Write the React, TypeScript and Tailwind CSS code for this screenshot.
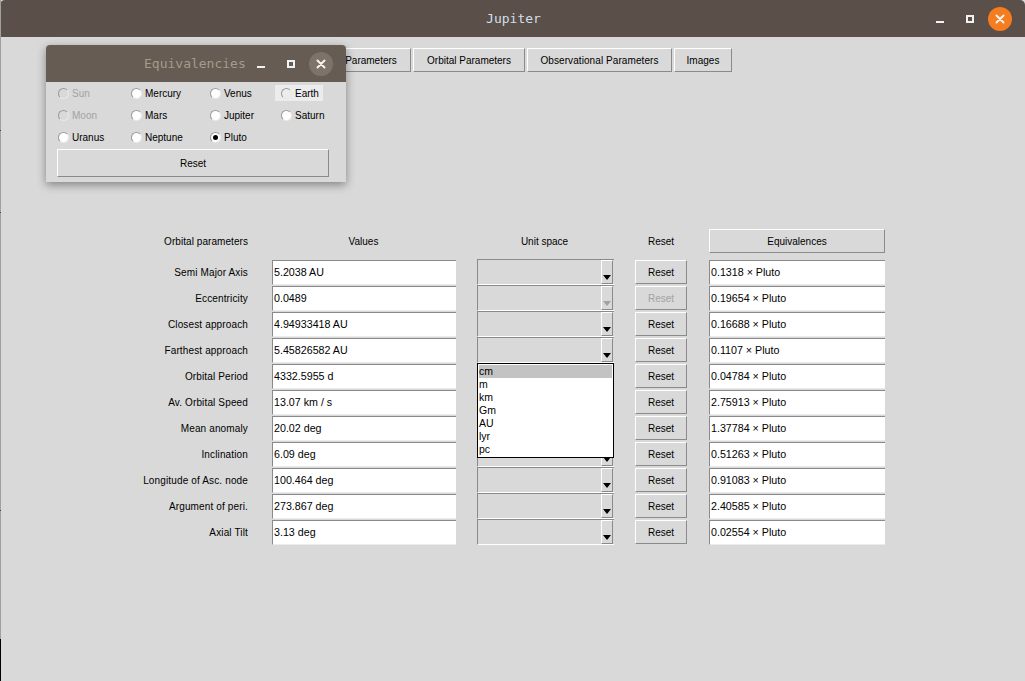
const sans = "font-['Liberation_Sans',Arial,sans-serif]";

const rows = [
  ["Semi Major Axis", "5.2038 AU", "0.1318 × Pluto"],
  ["Eccentricity", "0.0489", "0.19654 × Pluto"],
  ["Closest approach", "4.94933418 AU", "0.16688 × Pluto"],
  ["Farthest approach", "5.45826582 AU", "0.1107 × Pluto"],
  ["Orbital Period", "4332.5955 d", "0.04784 × Pluto"],
  ["Av. Orbital Speed", "13.07 km / s", "2.75913 × Pluto"],
  ["Mean anomaly", "20.02 deg", "1.37784 × Pluto"],
  ["Inclination", "6.09 deg", "0.51263 × Pluto"],
  ["Longitude of Asc. node", "100.464 deg", "0.91083 × Pluto"],
  ["Argument of peri.", "273.867 deg", "2.40585 × Pluto"],
  ["Axial Tilt", "3.13 deg", "0.02554 × Pluto"],
];

const radios = [
  ["Sun", "Mercury", "Venus", "Earth"],
  ["Moon", "Mars", "Jupiter", "Saturn"],
  ["Uranus", "Neptune", "Pluto", ""],
];

function TkButton({ label, className = "", disabled = false }: { label: string; className?: string; disabled?: boolean }) {
  return (
    <div
      className={`flex items-center justify-center border border-t-white border-l-white border-b-[#8a8a8a] border-r-[#8a8a8a] bg-[#d9d9d9] ${
        disabled ? "text-[#a3a3a3]" : "text-black"
      } ${className}`}
    >
      {label}
    </div>
  );
}

function Entry({ value, className = "" }: { value: string; className?: string }) {
  return (
    <div
      className={`mt-[1px] flex h-[25px] items-center self-start border-t border-l border-b border-t-[#8a8a8a] border-l-[#8a8a8a] border-b-[#ececec] bg-white pl-[1px] text-[10.7px] text-black ${className}`}
    >
      {value}
    </div>
  );
}

function Combo({ disabled = false }: { disabled?: boolean }) {
  return (
    <div className="flex h-[26px] w-[137px] justify-end border-t border-l border-b border-t-[#8a8a8a] border-l-[#8a8a8a] border-b-white">
      <div className="mr-[1px] flex w-[12px] items-end justify-center border border-t-white border-l-white border-b-[#8a8a8a] border-r-[#8a8a8a] pb-[3px]">
        <svg width="8" height="5" viewBox="0 0 8 5">
          <path d="M0 0H8L4 5Z" fill={disabled ? "#a3a3a3" : "#000"} />
        </svg>
      </div>
    </div>
  );
}

function Radio({ label }: { label: string }) {
  const disabled = label === "Sun" || label === "Moon";
  const hot = label === "Earth";
  return (
    <div
      className={`flex h-[16px] items-center gap-[3px] ${
        hot ? "ml-[-6px] w-[48px] bg-[#ececec] pl-[6px]" : ""
      } ${disabled ? "text-[#a3a3a3]" : "text-black"}`}
    >
      <span
        className={`flex h-[11px] w-[11px] shrink-0 items-center justify-center rounded-full border border-[#9a9a9a] border-b-[#e8e8e8] border-r-[#e8e8e8] ${
          hot ? "bg-[#ececec]" : disabled ? "bg-[#d9d9d9]" : "bg-white"
        }`}
      >
        {label === "Pluto" && <span className="h-[5px] w-[5px] rounded-full bg-black" />}
      </span>
      <span>{label}</span>
    </div>
  );
}

function CloseIcon() {
  return (
    <svg width="10" height="10" viewBox="0 0 10 10">
      <path d="M1.5 1.5L8.5 8.5M8.5 1.5L1.5 8.5" stroke="#f2f2f2" strokeWidth="2" strokeLinecap="round" />
    </svg>
  );
}

export default function App() {
  return (
    <div className={`relative h-[681px] w-[1025px] overflow-hidden bg-[#d9d9d9] text-[10px] ${sans}`}>
      <header className="relative flex h-[37px] items-center justify-center rounded-t-[5px] bg-[#5a4f49] pl-[2px]">
        <span className="font-['DejaVu_Sans_Mono',monospace] text-[13px] text-[#d3dfe9]">Jupiter</span>
        <div className="absolute right-[13px] top-[7px] flex items-center">
          <span className="mt-[6px] h-[2px] w-[8px] bg-[#f2f2f2]" />
          <span className="ml-[22px] h-[8px] w-[8px] border-2 border-[#f2f2f2]" />
          <span className="ml-[14px] flex h-[24px] w-[24px] items-center justify-center rounded-full bg-[#f57c1f]">
            <CloseIcon />
          </span>
        </div>
      </header>

      <nav className="ml-[291px] mt-[11px] flex h-[24px] gap-[2px]">
        <TkButton label="Physical Parameters" className="w-[120px]" />
        <TkButton label="Orbital Parameters" className="w-[112px]" />
        <TkButton label="Observational Parameters" className="w-[145px] tracking-[0.08px]" />
        <TkButton label="Images" className="w-[58px]" />
      </nav>

      <main className="ml-[100px] mt-[157px]">
        <div className="flex h-[30px] items-center pb-[6px]">
          <div className="w-[149px] pr-[1px] text-right tracking-[0.06px]">Orbital parameters</div>
          <div className="ml-[23px] w-[183px] text-center">Values</div>
          <div className="ml-[22px] w-[135px] text-center">Unit space</div>
          <div className="ml-[23px] w-[52px] text-center">Reset</div>
          <TkButton label="Equivalences" className="ml-[22px] h-[24px] w-[176px]" />
        </div>
        {rows.map(([name, value, eq], i) => (
          <div key={name} className="flex h-[26px] items-center">
            <div className="w-[149px] pr-[1px] text-right tracking-[0.14px]">{name}</div>
            <Entry value={value} className="ml-[23px] w-[184px]" />
            <div className="ml-[21px]">
              <Combo disabled={i === 1} />
            </div>
            <TkButton label="Reset" disabled={i === 1} className="ml-[21px] h-[24px] w-[52px]" />
            <Entry value={eq} className="ml-[22px] w-[176px]" />
          </div>
        ))}
      </main>

      <div className="absolute left-[477px] top-[363px] flex h-[95px] w-[137px] flex-col border border-black bg-white p-[1px] text-[10.5px] leading-[13px] text-black">
        {["cm", "m", "km", "Gm", "AU", "lyr", "pc"].map((u, i) => (
          <div key={u} className={`h-[13px] ${i === 0 ? "bg-[#c3c3c3]" : ""}`}>
            {u}
          </div>
        ))}
      </div>

      <section className="absolute left-[46px] top-[45px] flex h-[137px] w-[300px] flex-col rounded-t-[4px] bg-[#d9d9d9] shadow-[0_3px_10px_rgba(0,0,0,0.4)]">
        <div className="relative flex h-[37px] items-center rounded-t-[4px] bg-[#675c54] pl-[98px]">
          <span className="font-['DejaVu_Sans_Mono',monospace] text-[13px] text-[#a89a8b]">Equivalencies</span>
          <div className="absolute left-[211px] top-[7px] flex items-center">
            <span className="mt-[6px] h-[2px] w-[8px] bg-[#f2f2f2]" />
            <span className="ml-[22px] h-[8px] w-[8px] border-2 border-[#f2f2f2]" />
            <span className="ml-[14px] flex h-[24px] w-[24px] items-center justify-center rounded-full bg-[#7e736b]">
              <CloseIcon />
            </span>
          </div>
        </div>
        <div className="ml-[12px] mt-[3px] grid grid-cols-[73px_79px_71px_1fr] grid-rows-[16px_16px_16px] gap-y-[6px]">
          {radios.flat().map((r, i) => (r ? <Radio key={r} label={r} /> : <div key={i} />))}
        </div>
        <TkButton label="Reset" className="ml-[11px] mt-[4px] h-[28px] w-[272px]" />
      </section>

      <div className="absolute left-0 top-0 h-[639px] w-[1px] bg-[#a0a0a0]" />
      <div className="absolute left-0 top-[639px] h-[42px] w-[1px] bg-black" />
      <div className="absolute left-0 top-[130px] h-[1px] w-[1px] bg-[#444444]" />
      <div className="absolute left-0 top-[212px] h-[1px] w-[1px] bg-[#444444]" />
      <div className="absolute left-0 top-[510px] h-[1px] w-[1px] bg-[#444444]" />
    </div>
  );
}
